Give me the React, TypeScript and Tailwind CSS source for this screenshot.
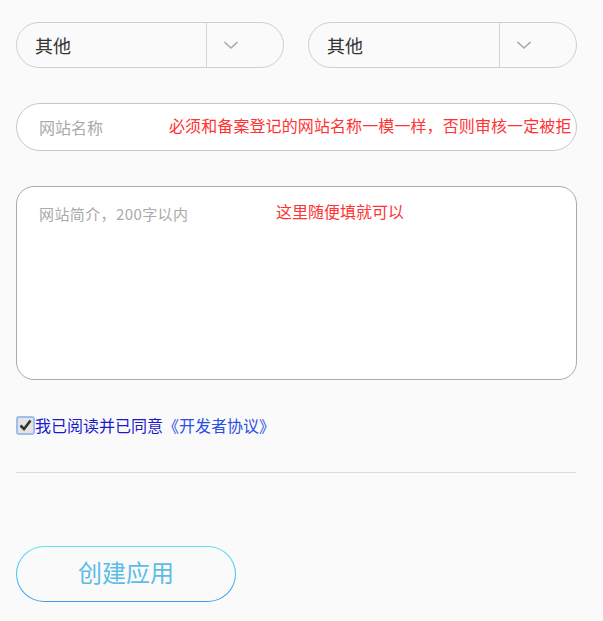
const CJK = { fontFamily: '"Noto Sans CJK SC", "Noto Sans", sans-serif' };

function Chevron() {
  return (
    <svg width="16" height="10" viewBox="0 0 16 10" fill="none">
      <path d="M1.5 2 L8 8 L14.5 2" stroke="#a8a8a8" strokeWidth="1.6" />
    </svg>
  );
}

function SelectBox({ value }: { value: string }) {
  return (
    <div className="flex h-[46px] items-stretch rounded-full border border-[#cfcfcf] bg-[#fafafa]">
      <div className="flex flex-1 items-center pl-[18px] text-[18px] font-normal text-[#333]">{value}</div>
      <div className="w-px bg-[#d6d6d6]" />
      <div className="flex w-[76px] items-center pl-[16px]">
        <Chevron />
      </div>
    </div>
  );
}

export default function App() {
  return (
    <div className="min-h-[621px] w-[603px] bg-[#fafafa]" style={CJK}>
      <div className="ml-4 w-[561px] pt-[22px]">
        <div className="grid grid-cols-[268px_269px] gap-6">
          <SelectBox value="其他" />
          <SelectBox value="其他" />
        </div>

        <div className="mt-[35px] flex h-[48px] items-center rounded-full border border-[#c8c8c8] bg-white pl-[22px]">
          <span className="w-[130px] text-[16px] text-[#aaa]">网站名称</span>
          <span className="-mt-1 text-[16px] tracking-[0.1px] text-[#ff3333]">必须和备案登记的网站名称一模一样，否则审核一定被拒</span>
        </div>

        <div className="mt-[35px] h-[194px] rounded-[18px] border border-[#aaa] bg-white pl-[22px] pt-[12px]">
          <div className="flex items-start">
            <span className="mt-[4px] w-[237px] text-[15px] tracking-[0.4px] text-[#aaa]">网站简介，200字以内</span>
            <span className="text-[16px] text-[#ff3333]">这里随便填就可以</span>
          </div>
        </div>

        <div className="mt-[35px] flex h-[20px] items-center leading-[20px]">
          <span className="flex h-[19px] w-[19px] shrink-0 items-center justify-center rounded-[3px] border-2 border-[#9cc0ee] bg-[#e4e4e4]">
            <svg width="13" height="12" viewBox="0 0 13 12">
              <path d="M1.5 6.5 L5 10 L11.5 1.5" stroke="#333" strokeWidth="2.6" fill="none" />
            </svg>
          </span>
          <span className="text-[16px] text-[#1a1acc]">我已阅读并已同意</span>
          <span className="text-[16px] text-[#2a4fe6]">《开发者协议》</span>
        </div>

        <div className="mt-[37px] h-px w-[560px] bg-[#dcdcdc]" />

        <div className="mt-[73px] w-[220px] rounded-full bg-gradient-to-b from-[#5fe0f5] to-[#3a9cf0] p-px">
          <div className="flex h-[54px] items-center justify-center rounded-full bg-[#fafafa] pb-[5px] text-[24px] leading-none text-[#5bbde6]">
            创建应用
          </div>
        </div>
      </div>
    </div>
  );
}
